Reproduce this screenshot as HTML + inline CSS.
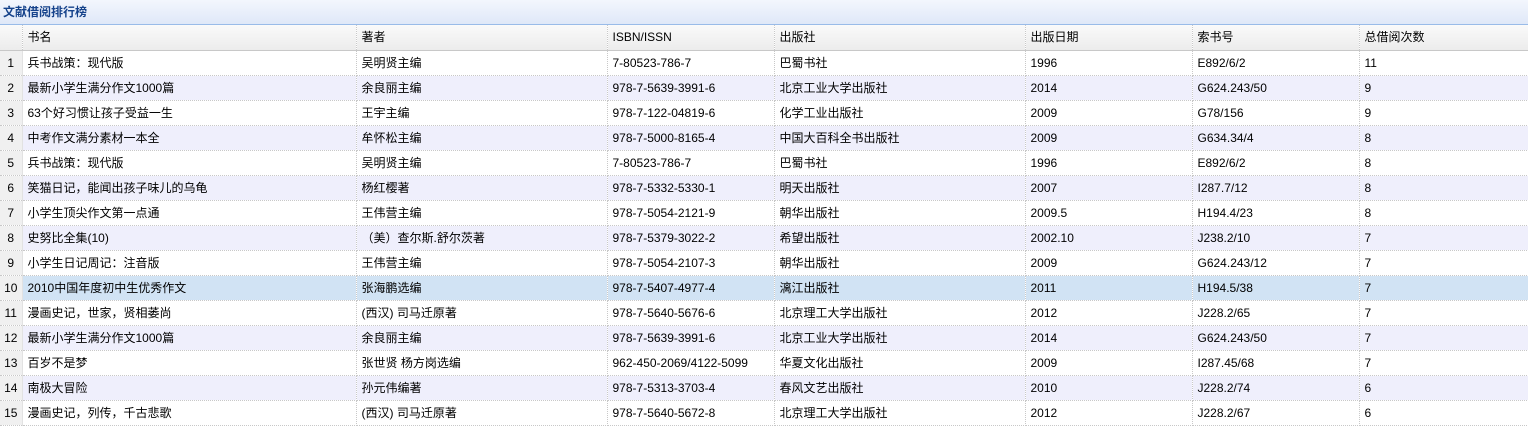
<!DOCTYPE html>
<html><head><meta charset="utf-8"><style>
*{margin:0;padding:0;box-sizing:border-box}
body{width:1528px;height:437px;background:#fff;font-family:"Liberation Sans","Noto Sans CJK SC",sans-serif;font-size:12px;color:#000;overflow:hidden;position:relative}
.title{height:25px;background:linear-gradient(#f3f6fd,#dfe8f8);border-bottom:1px solid #99bbe8;color:#15428b;font-weight:bold;font-size:12px;line-height:24px;padding-left:3px}
table{border-collapse:collapse;table-layout:fixed;width:1528px}
td{height:25px;line-height:24px;padding-left:5px;white-space:nowrap;overflow:hidden;border-right:1px dotted #c8c8c8;border-bottom:1px dotted #c8c8c8}
tr.h td{background:linear-gradient(#fafafa,#ececec);border-bottom:1px solid #c8c8c8;border-right:1px dotted #c8c8c8}
td.n{background:#f0f0f0;padding:0;text-align:center;border-right:1px solid #e2e2e2}
tr.h td.n{background:linear-gradient(#fafafa,#ececec)}
tr.a td{background:#efeffc}
tr.a td.n{background:#f0f0f0}
tr.s td{background:#d1e3f4}
tr.s td.n{background:#f0f0f0}
</style></head><body>
<div class="title">文献借阅排行榜</div>
<table>
<colgroup><col style="width:22px"><col style="width:334px"><col style="width:251px"><col style="width:167px"><col style="width:251px"><col style="width:167px"><col style="width:167px"><col style="width:169px"></colgroup>
<tr class="h"><td class="n"></td><td>书名</td><td>著者</td><td>ISBN/ISSN</td><td>出版社</td><td>出版日期</td><td>索书号</td><td>总借阅次数</td></tr>
<tr><td class="n">1</td><td>兵书战策：现代版</td><td>吴明贤主编</td><td>7-80523-786-7</td><td>巴蜀书社</td><td>1996</td><td>E892/6/2</td><td>11</td></tr>
<tr class="a"><td class="n">2</td><td>最新小学生满分作文1000篇</td><td>余良丽主编</td><td>978-7-5639-3991-6</td><td>北京工业大学出版社</td><td>2014</td><td>G624.243/50</td><td>9</td></tr>
<tr><td class="n">3</td><td>63个好习惯让孩子受益一生</td><td>王宇主编</td><td>978-7-122-04819-6</td><td>化学工业出版社</td><td>2009</td><td>G78/156</td><td>9</td></tr>
<tr class="a"><td class="n">4</td><td>中考作文满分素材一本全</td><td>牟怀松主编</td><td>978-7-5000-8165-4</td><td>中国大百科全书出版社</td><td>2009</td><td>G634.34/4</td><td>8</td></tr>
<tr><td class="n">5</td><td>兵书战策：现代版</td><td>吴明贤主编</td><td>7-80523-786-7</td><td>巴蜀书社</td><td>1996</td><td>E892/6/2</td><td>8</td></tr>
<tr class="a"><td class="n">6</td><td>笑猫日记，能闻出孩子味儿的乌龟</td><td>杨红樱著</td><td>978-7-5332-5330-1</td><td>明天出版社</td><td>2007</td><td>I287.7/12</td><td>8</td></tr>
<tr><td class="n">7</td><td>小学生顶尖作文第一点通</td><td>王伟营主编</td><td>978-7-5054-2121-9</td><td>朝华出版社</td><td>2009.5</td><td>H194.4/23</td><td>8</td></tr>
<tr class="a"><td class="n">8</td><td>史努比全集(10)</td><td>（美）查尔斯.舒尔茨著</td><td>978-7-5379-3022-2</td><td>希望出版社</td><td>2002.10</td><td>J238.2/10</td><td>7</td></tr>
<tr><td class="n">9</td><td>小学生日记周记：注音版</td><td>王伟营主编</td><td>978-7-5054-2107-3</td><td>朝华出版社</td><td>2009</td><td>G624.243/12</td><td>7</td></tr>
<tr class="s"><td class="n">10</td><td>2010中国年度初中生优秀作文</td><td>张海鹏选编</td><td>978-7-5407-4977-4</td><td>漓江出版社</td><td>2011</td><td>H194.5/38</td><td>7</td></tr>
<tr><td class="n">11</td><td>漫画史记，世家，贤相萎尚</td><td>(西汉) 司马迁原著</td><td>978-7-5640-5676-6</td><td>北京理工大学出版社</td><td>2012</td><td>J228.2/65</td><td>7</td></tr>
<tr class="a"><td class="n">12</td><td>最新小学生满分作文1000篇</td><td>余良丽主编</td><td>978-7-5639-3991-6</td><td>北京工业大学出版社</td><td>2014</td><td>G624.243/50</td><td>7</td></tr>
<tr><td class="n">13</td><td>百岁不是梦</td><td>张世贤 杨方岗选编</td><td>962-450-2069/4122-5099</td><td>华夏文化出版社</td><td>2009</td><td>I287.45/68</td><td>7</td></tr>
<tr class="a"><td class="n">14</td><td>南极大冒险</td><td>孙元伟编著</td><td>978-7-5313-3703-4</td><td>春风文艺出版社</td><td>2010</td><td>J228.2/74</td><td>6</td></tr>
<tr><td class="n">15</td><td>漫画史记，列传，千古悲歌</td><td>(西汉) 司马迁原著</td><td>978-7-5640-5672-8</td><td>北京理工大学出版社</td><td>2012</td><td>J228.2/67</td><td>6</td></tr>
</table>
</body></html>
